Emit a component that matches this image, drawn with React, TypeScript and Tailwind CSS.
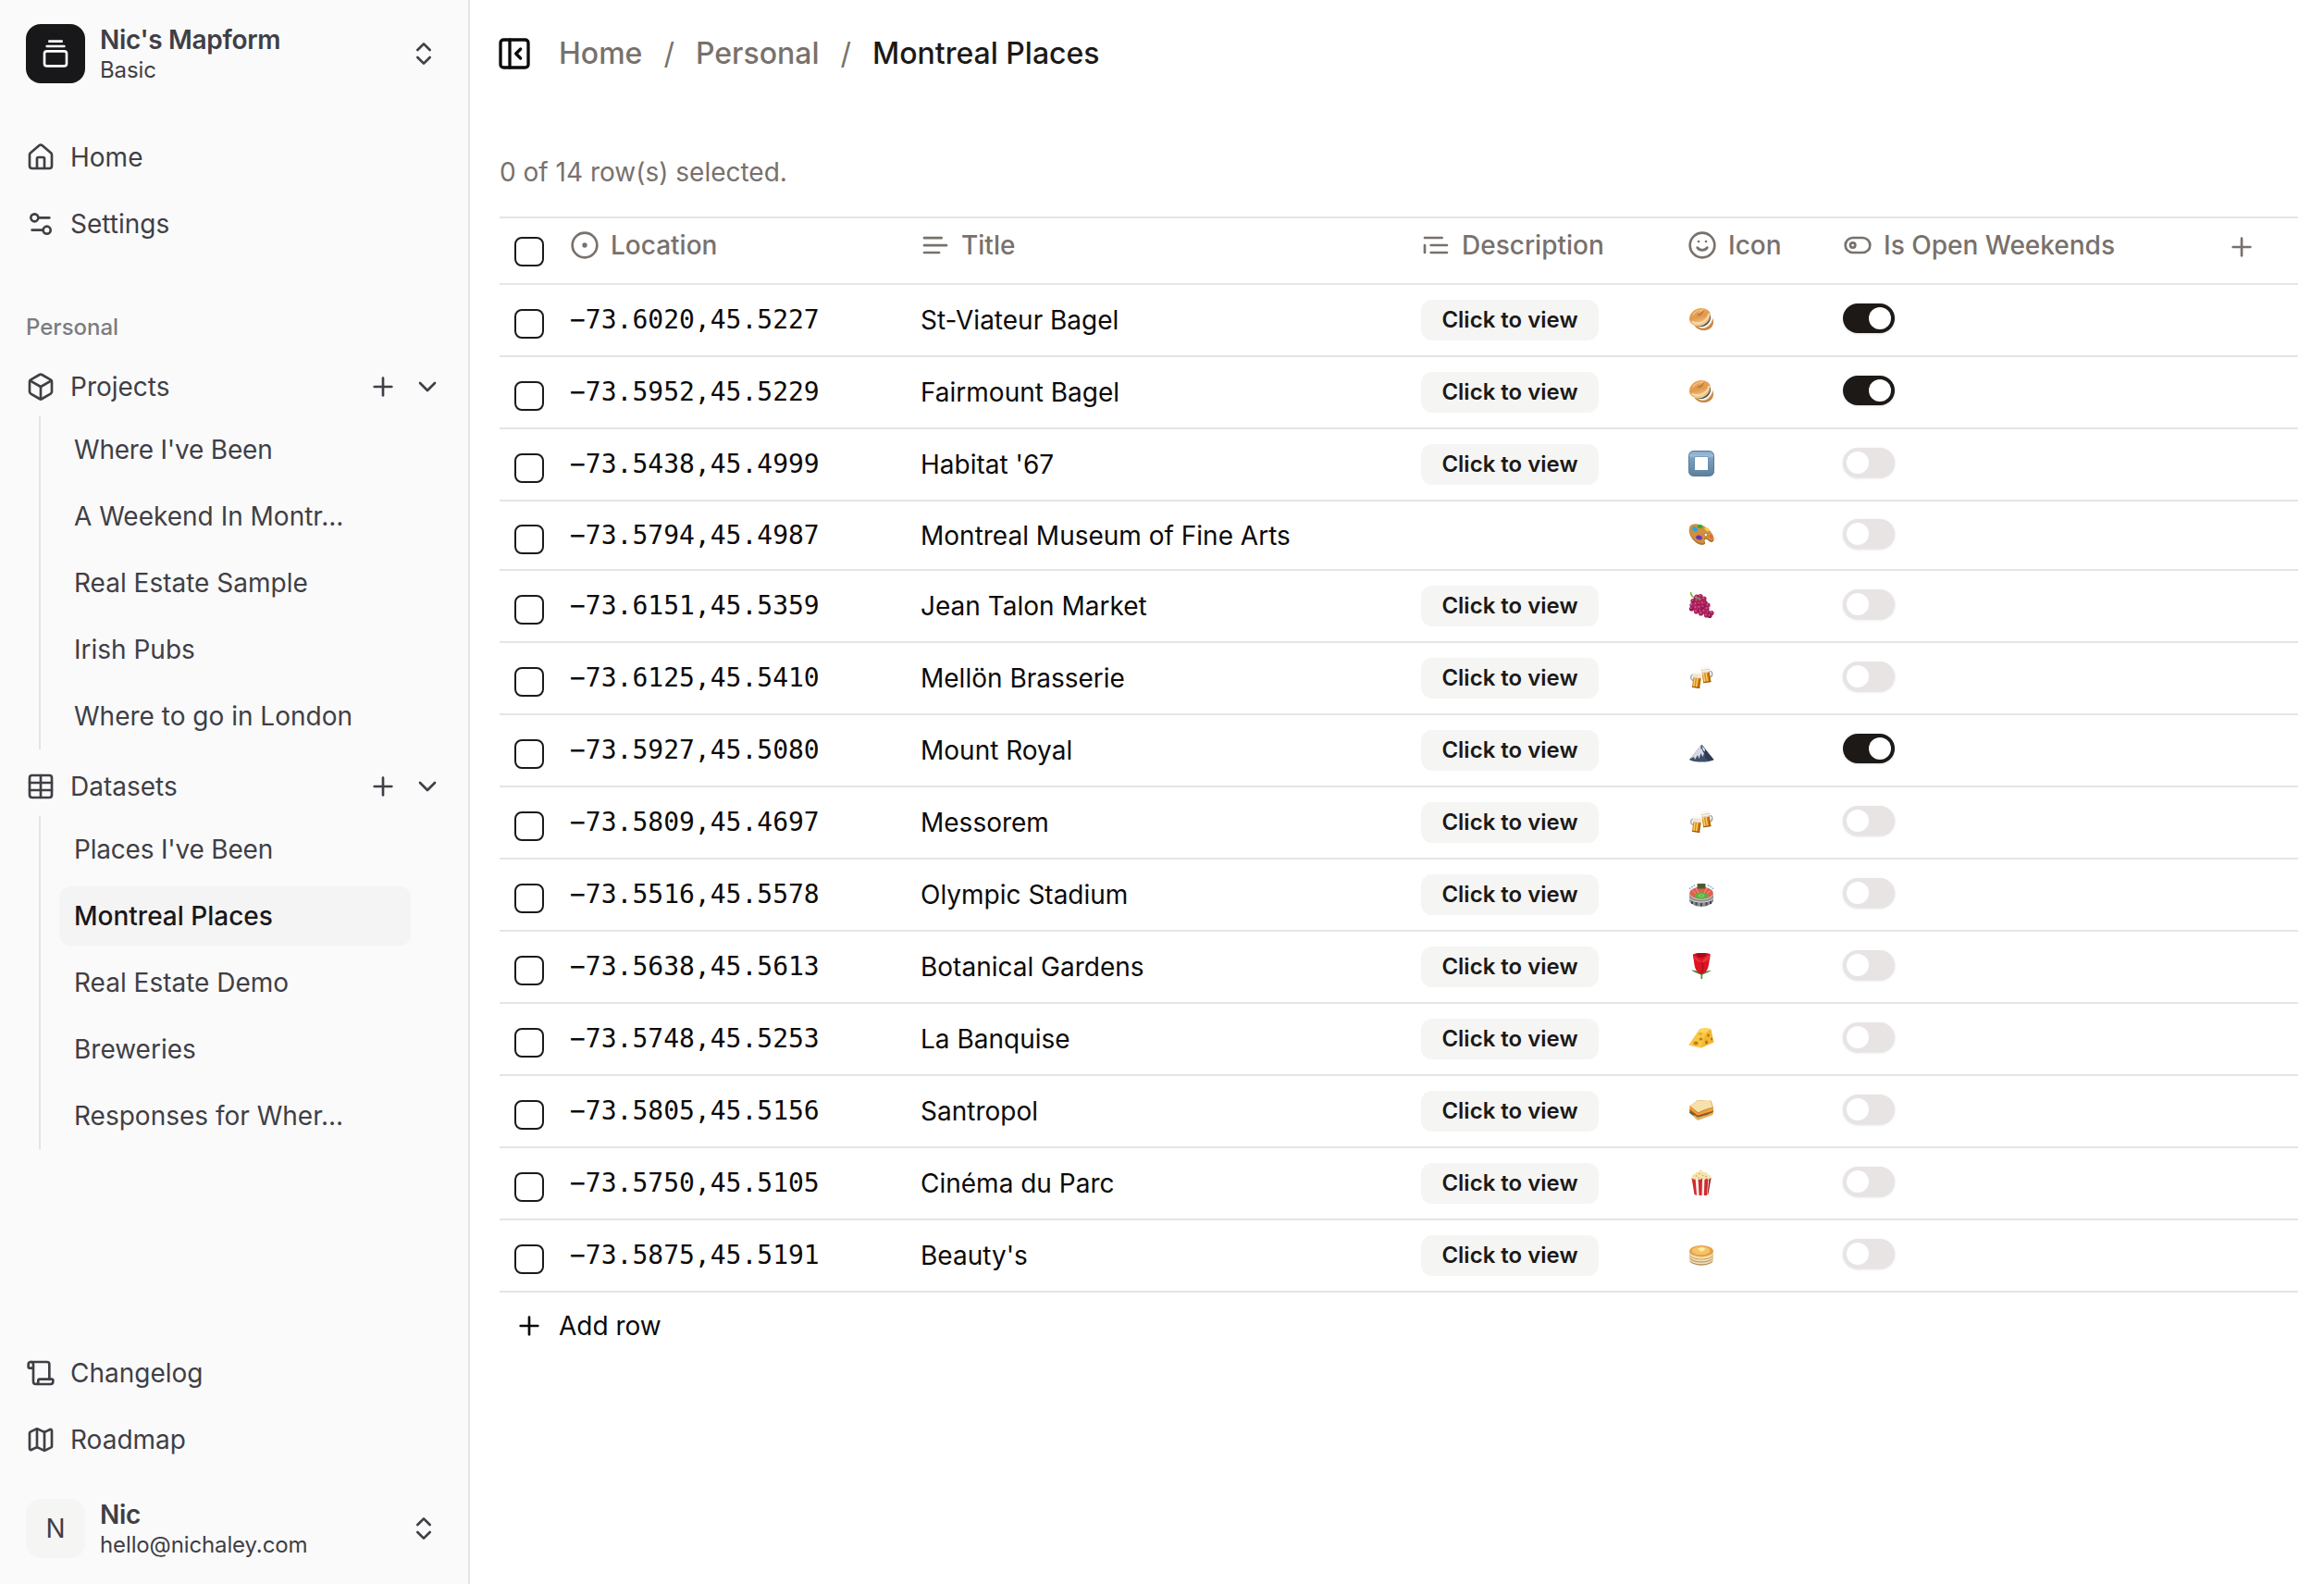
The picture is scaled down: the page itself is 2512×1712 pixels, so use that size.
import React from "react";
import {
  Box,
  ChevronDown,
  ChevronsUpDown,
  CircleDot,
  GalleryVerticalEnd,
  House,
  Map as MapIcon,
  PanelLeftClose,
  Plus,
  Scroll,
  Settings2,
  Smile,
  Table,
} from "lucide-react";

const strokeProps = {
  viewBox: "0 0 24 24",
  fill: "none",
  stroke: "currentColor",
  strokeWidth: 2,
  strokeLinecap: "round" as const,
  strokeLinejoin: "round" as const,
};

const TextLines = () => (
  <svg {...strokeProps} className="size-8 shrink-0">
    <path d="M17 6.1H3M21 12.1H3M15.1 18H3" />
  </svg>
);

const QuoteLines = () => (
  <svg {...strokeProps} className="size-8 shrink-0">
    <path d="M17 6H3M21 12H8M21 18H8M3 12v6" />
  </svg>
);

const TogglePill = () => (
  <svg {...strokeProps} className="size-8 shrink-0">
    <rect width="20" height="12" x="2" y="6" rx="6" />
    <circle cx="8" cy="12" r="2" />
  </svg>
);

const Emoji = ({ children }: { children: React.ReactNode }) => (
  <svg viewBox="0 0 28 28" className="ml-px size-7 -translate-y-px">
    {children}
  </svg>
);

const Bagel = () => (
  <Emoji>
    <defs>
      <linearGradient id="bagelTop" x1="0.3" y1="0" x2="0.6" y2="1">
        <stop offset="0" stopColor="#e9a75c" />
        <stop offset="0.5" stopColor="#e09a50" />
        <stop offset="1" stopColor="#f8d69b" />
      </linearGradient>
    </defs>
    <path d="M6 20c2 4 7 6.500 12 6 5-.500 9-4 9-9 0-3-1-5-3-7z" fill="#c98743" />
    <path d="M7 19.500c4 4 9 5.500 13 3 4-2.500 6.800-7 6-11.500L23 9z" fill="#f7f5f0" />
    <path d="M8 20.500c4 2.500 8.500 2 12-.800 3-2.300 4.500-5.700 4-9.200L21 8z" fill="#4a4a48" />
    <path
      d="M1 13.500C1 7.500 7 2.300 13.500 2.100 19 2 23.700 5 23.700 9.500c0 6-6 12-13 12C5 21.500 1 18.300 1 13.500z"
      fill="url(#bagelTop)"
    />
    <path d="M4 16.500c3 2.500 9 2.500 13-.500 3-2.200 5-5 5-8" stroke="#f9dcab" strokeWidth="2" fill="none" />
    <path d="M5 9c3-4 8-5.500 12-4.500" stroke="#f5c583" strokeWidth="1.300" fill="none" />
    <path d="M9 9.500c1.500-1.500 4-1.500 5-3.500l2.500-3c.5 3-1 6-4 7-1.500.6-3 .5-3.500-.5z" fill="#c47a38" />
    <path d="M13 6.500 16 3" stroke="#f9dca8" strokeWidth="1" />
  </Emoji>
);

const BlueSquare = () => (
  <Emoji>
    <defs>
      <linearGradient id="blueSquare" x1="0" y1="0" x2="0" y2="1">
        <stop offset="0" stopColor="#86a9c8" />
        <stop offset="0.2" stopColor="#9dbdd6" />
        <stop offset="0.28" stopColor="#7aa1c2" />
        <stop offset="1" stopColor="#5d7f9e" />
      </linearGradient>
    </defs>
    <rect x="0.500" y="0.500" width="27" height="27" rx="5" fill="url(#blueSquare)" stroke="#587997" />
    <rect x="6.500" y="6.500" width="15" height="15" rx="1" fill="#6589aa" />
    <rect x="7" y="7" width="14" height="14" rx="0.500" fill="#fff" />
  </Emoji>
);

const Palette = () => (
  <Emoji>
    <path
      d="M1 7C2 2.500 9 1.500 16 5c6 3 11 9 11.500 13.500.4 3-2.500 4.500-5 2.500-1.500-1.200-3-3-4.500-2s.5 3 0 4.500c-.8 2-5 2-9-.5C3.500 19.500-.3 12 1 7z"
      fill="#a8702a"
    />
    <path
      d="M1.200 6C2.300 1.800 9 1 16 4.300c6 3 11 8.700 11.300 13 .2 2.700-2.500 3.900-4.800 2.200-1.500-1.200-3.300-2.900-5-1.900-1.600 1 .3 2.900-.2 4.300-.8 2-4.700 1.700-8.300-.6C3.500 18 .2 10.800 1.200 6z"
      fill="#cf9040"
    />
    <ellipse cx="12.500" cy="5" rx="3" ry="2.100" fill="#35a73c" />
    <ellipse cx="7" cy="8" rx="3.300" ry="2.300" transform="rotate(40 7 8)" fill="#2aa7dc" />
    <ellipse cx="20" cy="8" rx="3" ry="1.700" transform="rotate(35 20 8)" fill="#f6cc3f" />
    <ellipse cx="11.500" cy="17" rx="3.400" ry="2.400" transform="rotate(15 11.500 17)" fill="#6f30b5" />
    <ellipse cx="24.500" cy="16" rx="2.400" ry="1.800" transform="rotate(50 24.500 16)" fill="#f0604b" />
    <circle cx="18.800" cy="14" r="1.700" fill="#fff" stroke="#8a5a20" strokeWidth="0.600" />
  </Emoji>
);

const grapeDots: [number, number][] = [
  [9, 5], [13, 4.500], [17, 7], [5, 9.500], [9, 9], [13, 8.500], [18, 11.500],
  [4, 14], [8, 13], [12, 12.500], [15.500, 12], [21, 14], [3.500, 18], [8, 17],
  [12, 16.500], [16, 16], [20, 18], [8.500, 21], [13, 20.500], [17, 20.500],
  [13.500, 23], [21, 22], [25, 22.500], [19.500, 25], [23, 25.500],
];

const Grapes = () => (
  <Emoji>
    <path d="M2.500 0c0 4 3 6.500 8 7" stroke="#7fae3b" strokeWidth="1.500" fill="none" />
    <path d="M6 4h13l4 14-4 7-10-3-7-5z" fill="#7c153f" transform="scale(.9) translate(1 2)" />
    {grapeDots.map(([x, y], i) => (
      <g key={i}>
        <circle cx={x} cy={y} r="2.600" fill={i % 3 === 0 ? "#97174f" : "#ae2461"} />
        <circle cx={x - 0.600} cy={y - 0.800} r="0.900" fill="#d65c92" />
      </g>
    ))}
    <path d="M7 5.500c2 .2 4 .8 6 2.500" stroke="#7fae3b" strokeWidth="1.300" fill="none" />
  </Emoji>
);

const Mug = ({ transform }: { transform: string }) => (
  <g transform={transform}>
    <rect x="0" y="3" width="8.500" height="14" rx="1.200" fill="#d98a1d" />
    <path d="M1.800 6v10M4.500 6v10" stroke="#ffd76a" strokeWidth="1.200" />
    <path d="M7.200 6v10" stroke="#a3580f" strokeWidth="1.200" />
    <path d="M0 16.500h8.500" stroke="#8d4d18" strokeWidth="1" />
    <rect x="-1" y="0" width="10.500" height="6.300" rx="2.800" fill="#faf5ee" />
    <path d="M0 5.600h8.500M-.3 3c2 1 3 .5 5 .2s3-.2 4.500.3" stroke="#d8c6b0" strokeWidth="0.800" fill="none" />
  </g>
);

const Beers = () => (
  <Emoji>
    <path d="M22.500 7.500c4-1 4.500 5.500.5 6.500" stroke="#a9a9aa" strokeWidth="1.500" fill="none" />
    <Mug transform="translate(13.500 3.500) rotate(-9)" />
    <path d="M6.500 11c-5-.5-5 6.500-.5 6.500" stroke="#a9a9aa" strokeWidth="1.500" fill="none" />
    <Mug transform="translate(6.200 8) rotate(8)" />
  </Emoji>
);

const Mountain = () => (
  <Emoji>
    <path d="M1 25 9.500 14.500 13.500 9.500c.6-.6 1.200-.5 1.800.2L20 16l7.500 9c-3 1.800-8 2.600-13 2.600S4 27 1 25z" fill="#3f5069" />
    <path d="M13.500 9.500 5 20l-3 4 4-2 1 3 3-5 1.500 4 2-6 2 4 1.500-4 3 2-4.500-5.500c-.8-1-1.300-1.500-2-.5z" fill="#d5dbe5" />
    <path d="m14.500 10 1 6 2 3 1 5 4 2 5-.7L20 16l-4-5.500z" fill="#2c3c55" />
    <path d="m14.500 10 1.500 5 2 1.500-.5-3.500z" fill="#eef1f5" />
  </Emoji>
);

const Stadium = () => (
  <Emoji>
    <path d="M1 14v8c2 3.500 7 5.800 13 5.800S25 25.500 27 22v-8z" fill="#8b8d90" />
    <path d="M4 22v3M8.500 23v3.500M14 23.800v3.700M19.500 23v3.500M24 22v3" stroke="#45484c" strokeWidth="2" />
    <ellipse cx="14" cy="14" rx="13" ry="7" fill="#b9bbbe" />
    <ellipse cx="14" cy="13" rx="12.500" ry="6.500" fill="#e35f4e" />
    <path d="m3 9 6 6M25 9l-6 6M8 7.500l3 6M20 7.500l-3 6" stroke="#f7a08f" strokeWidth="0.800" />
    <ellipse cx="14" cy="16" rx="7.300" ry="3.500" fill="#56b53a" />
    <ellipse cx="14" cy="16" rx="3" ry="1.300" fill="none" stroke="#b6e3a0" strokeWidth="0.600" />
    <rect x="9.500" y="3" width="9" height="5.500" rx="0.700" fill="#4f5a33" />
    <path d="M1 8.500 8 4M27 8.500 20 4" stroke="#5f8fc4" strokeWidth="1.300" strokeDasharray="1.500 1.300" />
    <path d="M1 19c3 3 8 4 13 4s10-1 13-4" stroke="#d9dadc" strokeWidth="1" fill="none" />
  </Emoji>
);

const Rose = () => (
  <Emoji>
    <path d="M14.300 20v8" stroke="#4b9a35" strokeWidth="1.800" />
    <path d="M3 18.500c4 0 8 1 11 4 3-3 6.500-4 11-3-3.500.5-6.500 2.500-10.500 4.200C10.500 22.500 7 21 3 18.500z" fill="#3f7f2f" />
    <path d="M5 1.500C8-.5 20-.5 23.500 1c.5 2-.5 5-1 8-.5 5-1.500 12.500-8.500 13.500C7.500 21.500 6.500 14 6 9c-.3-3-1.500-6-1-7.500z" fill="#dc1423" />
    <path d="M8 1c3-1.500 9-1.500 12 0-1 2.500-4 4-6.500 4S9 3.500 8 1z" fill="#a80a18" />
    <path d="M5.500 3c4 1.500 6 5 8.500 6.500C17 7 18.500 3 23 2.500c-.5 5-2.500 7-8 8-6-1-8.500-3-9.500-7.500z" fill="#ee2f38" />
    <path d="M14.500 10c2 4 1.500 9-1 12" stroke="#a60c1d" strokeWidth="1.200" fill="none" />
  </Emoji>
);

const Cheese = () => (
  <Emoji>
    <path d="M.5 21.500 12.500 4c4-.8 9-.7 12 .5l3 14L14 24.500z" fill="#f2b632" />
    <path d="M12.500 4 .5 21.500 14 24.500l3-11c1-3.500 3-7 7.500-9-3-1.200-8-1.300-12-.5z" fill="#f8c744" />
    <path d="M13 4c4-.7 8.500-.6 11.500.5-3 1-5 2.500-6 4.500-2-1.500-4-2-7.500-2z" fill="#ffd65e" />
    <ellipse cx="8" cy="19.500" rx="2.600" ry="2" fill="#c47f18" />
    <ellipse cx="13.500" cy="15" rx="2" ry="1.600" fill="#c47f18" />
    <ellipse cx="21.500" cy="11" rx="1.300" ry="1.800" fill="#b87416" />
    <ellipse cx="19.500" cy="18.500" rx="1.500" ry="1.900" fill="#b87416" />
    <ellipse cx="25" cy="15" rx="1" ry="1.500" fill="#b87416" />
    <ellipse cx="13" cy="9.500" rx="1.500" ry="1" fill="#d6931f" />
  </Emoji>
);

const Sandwich = () => (
  <Emoji>
    <path d="M1 16.500 10 25l16.500-6V14L6 12z" fill="#e3b163" />
    <path d="M1 17c2 .5 3 3 5 2.500s2.500 2.500 5 2 4-1.500 7-2 5-2.500 8.500-3l.5-2.500L2 13.500z" fill="#3e7d2b" />
    <path d="m1 14.500 9 6.500 17-5.500V12L2 11z" fill="#d1402f" />
    <path d="M.8 12.500 10 19.500l17-5-.2-2.500L2 9.500z" fill="#f0a52e" />
    <path d="M1 9.500C4 8 7 5 10 3c5 .5 10 1 14 .5 1.500 2 2 5 3 8-6 1.500-11 3.500-16.500 6.200C7.500 15 4 12.500 1 9.500z" fill="#c98c3e" />
    <path d="M1.800 9C4.500 7.500 7.500 4.700 10 3.200c5 .5 9.500.8 13.500.5 1.200 1.800 1.800 4.300 2.600 6.700-5.600 1.500-10.500 3.300-15.500 5.800C7.700 13.700 4.500 11.800 1.800 9z" fill="#f6e1ab" />
  </Emoji>
);

const Popcorn = () => (
  <Emoji>
    <path d="m3.500 9 2.500 17c.3 1 1 1.500 2 1.700h12c1-.2 1.500-.7 1.700-1.700L24.500 9z" fill="#f7f1ec" />
    <path d="m3.500 9 3 18 2.500.8L7.500 9zM10.500 9l1 19h3l.5-19zM17.500 9l-.7 19H20L21.500 9z" fill="#d02b2f" />
    <path d="m22.500 9-2 18 1-.5L24.500 9z" fill="#a31d22" />
    <g fill="#f5e3ae">
      <circle cx="6.500" cy="8" r="2.700" />
      <circle cx="10" cy="5.300" r="2.700" />
      <circle cx="14" cy="4" r="2.600" />
      <circle cx="18" cy="5.500" r="2.700" />
      <circle cx="21.500" cy="8" r="2.500" />
      <circle cx="12" cy="8" r="2.800" />
      <circle cx="17" cy="8.300" r="2.600" />
      <circle cx="13" cy="1.500" r="1.200" />
    </g>
    <g fill="#d3a447">
      <circle cx="8.500" cy="7" r="0.800" />
      <circle cx="12" cy="4.500" r="0.800" />
      <circle cx="15.500" cy="6.500" r="0.800" />
      <circle cx="19" cy="7.500" r="0.800" />
      <circle cx="11" cy="9" r="0.700" />
    </g>
  </Emoji>
);

const Pancakes = () => (
  <Emoji>
    <ellipse cx="14" cy="20" rx="12.500" ry="5.700" fill="#b58c58" />
    <ellipse cx="14" cy="18.800" rx="12.700" ry="5.500" fill="#f0dfb8" />
    <ellipse cx="14" cy="17" rx="12.800" ry="5.500" fill="#c29a62" />
    <ellipse cx="14" cy="15.800" rx="12.700" ry="5.500" fill="#f3e2bc" />
    <ellipse cx="14" cy="14" rx="12.800" ry="5.500" fill="#c2955a" />
    <ellipse cx="14" cy="12.800" rx="12.900" ry="6" fill="#f5e0b0" />
    <ellipse cx="14" cy="10.200" rx="12.900" ry="6.200" fill="#e2a045" />
    <ellipse cx="13.500" cy="9.800" rx="10" ry="4.500" fill="#f6c269" />
    <path d="m10 7.500 5-1.500 4 2-5 3z" fill="#fdeea4" />
    <path d="m10 7.500 4 3.500v1.500L10 9z" fill="#f2cf6a" />
  </Emoji>
);

type Row = {
  coords: string;
  title: string;
  icon: () => React.JSX.Element;
  open?: boolean;
  noDescription?: boolean;
};

const rows: Row[] = [
  { coords: "−73.6020,45.5227", title: "St-Viateur Bagel", icon: Bagel, open: true },
  { coords: "−73.5952,45.5229", title: "Fairmount Bagel", icon: Bagel, open: true },
  { coords: "−73.5438,45.4999", title: "Habitat '67", icon: BlueSquare },
  { coords: "−73.5794,45.4987", title: "Montreal Museum of Fine Arts", icon: Palette, noDescription: true },
  { coords: "−73.6151,45.5359", title: "Jean Talon Market", icon: Grapes },
  { coords: "−73.6125,45.5410", title: "Mellön Brasserie", icon: Beers },
  { coords: "−73.5927,45.5080", title: "Mount Royal", icon: Mountain, open: true },
  { coords: "−73.5809,45.4697", title: "Messorem", icon: Beers },
  { coords: "−73.5516,45.5578", title: "Olympic Stadium", icon: Stadium },
  { coords: "−73.5638,45.5613", title: "Botanical Gardens", icon: Rose },
  { coords: "−73.5748,45.5253", title: "La Banquise", icon: Cheese },
  { coords: "−73.5805,45.5156", title: "Santropol", icon: Sandwich },
  { coords: "−73.5750,45.5105", title: "Cinéma du Parc", icon: Popcorn },
  { coords: "−73.5875,45.5191", title: "Beauty's", icon: Pancakes },
];

const Checkbox = () => <span className="block size-8 rounded-lg border-2 border-[#1c1917] bg-white" />;

const Switch = ({ on }: { on?: boolean }) => (
  <span
    className={
      on
        ? "flex h-8 w-14 items-center justify-end rounded-full bg-[#1c1917] px-1 shadow-sm"
        : "flex h-8 w-14 items-center rounded-full bg-[#e8e4e4] px-1 shadow-sm"
    }
  >
    <span className="size-6 rounded-full bg-white shadow-[0_20px_30px_-6px_rgba(0,0,0,0.05)]" />
  </span>
);

const columns = "grid grid-cols-[76px_379px_541px_288px_168px_415px_1fr]";

const HeaderCell = ({ icon, label }: { icon: React.ReactNode; label: string }) => (
  <div className="flex h-[58px] items-center gap-3 font-medium whitespace-nowrap">
    {icon}
    {label}
  </div>
);

const NavItem = ({ icon, label }: { icon: React.ReactNode; label: string }) => (
  <div className="flex h-16 items-center gap-4">
    {icon}
    {label}
  </div>
);

const NavGroup = ({
  icon,
  label,
  items,
  active,
}: {
  icon: React.ReactNode;
  label: string;
  items: string[];
  active?: string;
}) => (
  <section>
    <div className="flex h-16 items-center gap-4 pr-7">
      {icon}
      <span className="flex-1">{label}</span>
      <Plus className="size-8" />
      <ChevronDown className="size-8" />
    </div>
    <ul className="ml-3.5 flex flex-col gap-2 border-l-2 border-[#e4e4e7] py-1 pl-5">
      {items.map((item) => (
        <li
          key={item}
          className={
            item === active
              ? "flex h-16 w-[380px] items-center rounded-xl bg-[#f4f4f4] px-4 font-medium text-[#18181b]"
              : item.includes("'")
                ? "flex h-16 w-[380px] items-center px-4 tracking-[-0.2px]"
                : "flex h-16 w-[380px] items-center px-4"
          }
        >
          {item}
        </li>
      ))}
    </ul>
  </section>
);

const Account = ({ avatar, name, detail }: { avatar: React.ReactNode; name: string; detail: string }) => (
  <div className="flex h-16 items-center gap-4 pr-8">
    {avatar}
    <div className="flex-1">
      <div className="leading-[35px] font-semibold tracking-[-0.3px]">{name}</div>
      <div className="text-2xl leading-[30px] tracking-[-0.12px]">{detail}</div>
    </div>
    <ChevronsUpDown className="size-8" />
  </div>
);

export default function App() {
  return (
    <div className="flex h-[1712px] w-[2512px] overflow-hidden bg-white font-['Inter',sans-serif] text-[28px] leading-10 text-[#0c0a09]">
      <aside className="flex w-[508px] shrink-0 flex-col border-r-2 border-[#e8e4e4] bg-[#fafafa] pt-[26px] pb-7 pl-7 text-[#3f3f46]">
        <Account
          name="Nic's Mapform"
          detail="Basic"
          avatar={
            <span className="flex size-16 items-center justify-center rounded-2xl bg-[#18181b] text-white">
              <GalleryVerticalEnd className="size-8" />
            </span>
          }
        />
        <nav className="mt-12 flex flex-col gap-2">
          <NavItem icon={<House className="size-8" />} label="Home" />
          <NavItem icon={<Settings2 className="size-8" />} label="Settings" />
        </nav>
        <div className="mt-12 flex h-16 items-center text-2xl font-medium text-[#7c7c81]">Personal</div>
        <div className="flex flex-col gap-2">
          <NavGroup
            icon={<Box className="size-8" />}
            label="Projects"
            items={[
              "Where I've Been",
              "A Weekend In Montr...",
              "Real Estate Sample",
              "Irish Pubs",
              "Where to go in London",
            ]}
          />
          <NavGroup
            icon={<Table className="size-8" />}
            label="Datasets"
            active="Montreal Places"
            items={[
              "Places I've Been",
              "Montreal Places",
              "Real Estate Demo",
              "Breweries",
              "Responses for Wher...",
            ]}
          />
        </div>
        <div className="mt-auto mb-8 flex flex-col gap-2">
          <NavItem icon={<Scroll className="size-8" />} label="Changelog" />
          <NavItem icon={<MapIcon className="size-8" />} label="Roadmap" />
        </div>
        <Account
          name="Nic"
          detail="hello@nichaley.com"
          avatar={<span className="flex size-16 items-center justify-center rounded-2xl bg-[#f5f5f4]">N</span>}
        />
      </aside>

      <main className="flex-1 pr-7 pl-8">
        <header className="-ml-1 flex h-[116px] items-center text-[32px] font-medium text-[#78716c]">
          <PanelLeftClose className="mr-7 size-10 text-[#0c0a09]" />
          <span>Home</span>
          <span className="mx-[23px] font-normal">/</span>
          <span>Personal</span>
          <span className="mx-[23px] font-normal">/</span>
          <span className="text-[#1c1917]">Montreal Places</span>
        </header>
        <p className="mt-[50px] mb-7 text-[#78716c]">0 of 14 row(s) selected.</p>
        <div className="border-t-2 border-[#e8e4e4]">
          <div className={`${columns} h-[72px] border-b-2 border-[#e5e7eb] text-[#78716c]`}>
            <div className="pt-5 pl-4">
              <Checkbox />
            </div>
            <HeaderCell icon={<CircleDot className="size-8" />} label="Location" />
            <HeaderCell icon={<TextLines />} label="Title" />
            <HeaderCell icon={<QuoteLines />} label="Description" />
            <HeaderCell icon={<Smile className="size-8" />} label="Icon" />
            <HeaderCell icon={<TogglePill />} label="Is Open Weekends" />
            <div className="flex h-[62px] items-center">
              <Plus className="size-8" />
            </div>
          </div>
          {rows.map((row) => (
            <div
              key={row.coords}
              className={
                row.noDescription
                  ? `${columns} h-[75px] items-center border-b-2 border-[#e8e4e4]`
                  : `${columns} h-[78px] items-center border-b-2 border-[#e8e4e4]`
              }
            >
              <div className="pt-2 pl-4">
                <Checkbox />
              </div>
              <div className="font-['DejaVu_Sans_Mono',monospace]">{row.coords}</div>
              <div>{row.title}</div>
              <div>
                {!row.noDescription && (
                  <button className="flex h-11 w-48 items-center justify-center rounded-xl bg-[#f5f5f4] text-2xl font-semibold text-[#1c1917]">
                    Click to view
                  </button>
                )}
              </div>
              <row.icon />
              <div className="pb-1">
                <Switch on={row.open} />
              </div>
            </div>
          ))}
          <div className="flex h-[72px] items-center gap-4 pl-4">
            <Plus className="size-8" />
            Add row
          </div>
        </div>
      </main>
    </div>
  );
}
